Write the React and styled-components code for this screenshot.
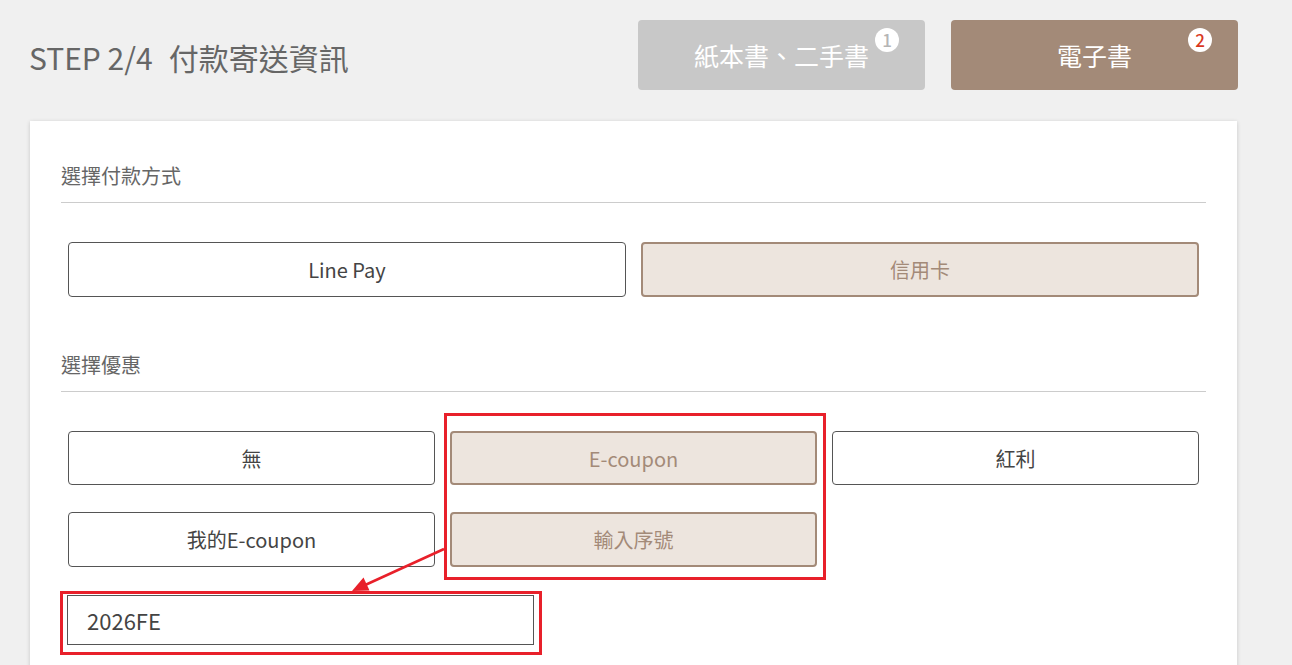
import React from 'react';
import styled, { createGlobalStyle } from 'styled-components';

const GlobalStyle = createGlobalStyle`
  html, body {
    margin: 0;
    padding: 0;
    background: #f0f0f0;
    font-family: "Noto Sans CJK TC", "Noto Sans", sans-serif;
  }
  * {
    box-sizing: border-box;
  }
`;

const Page = styled.div`
  width: 1208px;
  margin-left: 30px;
  padding-top: 20px;
`;

const Header = styled.div`
  display: flex;
  justify-content: space-between;
  align-items: center;
`;

const Title = styled.h1`
  margin: 4px 0 0 -1px;
  font-size: 30px;
  font-weight: 400;
  color: #666;

  span {
    margin-left: 16px;
  }
`;

const Tabs = styled.div`
  display: flex;
  gap: 26px;
`;

const Tab = styled.div`
  position: relative;
  width: 287px;
  height: 70px;
  border-radius: 4px;
  background: ${(p) => (p.$active ? '#a38a78' : '#c8c8c8')};
  color: #fff;
  font-size: 25px;
  display: flex;
  align-items: center;
  justify-content: center;
`;

const Badge = styled.span`
  position: absolute;
  top: 8px;
  right: 26px;
  width: 24px;
  height: 24px;
  border-radius: 50%;
  background: #fff;
  color: ${(p) => (p.$active ? '#d9381e' : '#b5b5b5')};
  font-size: 17px;
  line-height: 24px;
  text-align: center;
  font-weight: 500;
`;

const Card = styled.div`
  position: relative;
  margin-top: 31px;
  width: 1207px;
  min-height: 560px;
  background: #fff;
  box-shadow: 0 1px 4px rgba(0, 0, 0, 0.18);
  padding: 41px 31px 40px;
`;

const SectionLabel = styled.div`
  font-size: 20px;
  line-height: 27px;
  color: #666;
  padding-bottom: 13px;
  border-bottom: 1px solid #ccc;
  margin-top: ${(p) => p.$top || 0}px;
`;

const OptionGrid = styled.div`
  display: grid;
  grid-template-columns: repeat(${(p) => p.$cols}, 1fr);
  column-gap: 15px;
  row-gap: 27px;
  padding: 0 7px;
  margin-top: 39px;
`;

const Option = styled.div`
  height: ${(p) => p.$h || 55}px;
  border-radius: 4px;
  border: ${(p) => (p.$selected ? '2px solid #a38a78' : '1px solid #555')};
  background: ${(p) => (p.$selected ? '#ede5de' : '#fff')};
  color: ${(p) => (p.$selected ? '#a38a78' : '#444')};
  font-size: 20px;
  display: flex;
  align-items: center;
  justify-content: center;
`;

const SerialInput = styled.input`
  display: block;
  margin: 28px 0 0 6px;
  width: 467px;
  height: 50px;
  border: 1px solid #555;
  border-radius: 0;
  padding: 0 19px;
  font-family: inherit;
  font-size: 22px;
  color: #444;
  outline: none;
`;

const Highlight = styled.div`
  position: absolute;
  left: ${(p) => p.$x}px;
  top: ${(p) => p.$y}px;
  width: ${(p) => p.$w}px;
  height: ${(p) => p.$h}px;
  border: 3px solid #e8202a;
  pointer-events: none;
`;

const ArrowSvg = styled.svg`
  position: absolute;
  left: 0;
  top: 0;
  overflow: visible;
  pointer-events: none;
`;

export default function App() {
  return (
    <>
      <GlobalStyle />
      <Page>
        <Header>
          <Title>
            STEP 2/4<span>付款寄送資訊</span>
          </Title>
          <Tabs>
            <Tab>
              紙本書、二手書
              <Badge>1</Badge>
            </Tab>
            <Tab $active>
              電子書
              <Badge $active>2</Badge>
            </Tab>
          </Tabs>
        </Header>

        <Card>
          <SectionLabel>選擇付款方式</SectionLabel>
          <OptionGrid $cols={2}>
            <Option>Line Pay</Option>
            <Option $selected>信用卡</Option>
          </OptionGrid>

          <SectionLabel $top={54}>選擇優惠</SectionLabel>
          <OptionGrid $cols={3}>
            <Option $h={54}>無</Option>
            <Option $h={54} $selected>E-coupon</Option>
            <Option $h={54}>紅利</Option>
            <Option>我的E-coupon</Option>
            <Option $selected>輸入序號</Option>
          </OptionGrid>
          <SerialInput defaultValue="2026FE" />

          <Highlight $x={414} $y={292} $w={382} $h={167} />
          <Highlight $x={30} $y={470} $w={482} $h={64} />
          <ArrowSvg width="1" height="1">
            <line x1="414" y1="428" x2="333" y2="465" stroke="#e8202a" strokeWidth="2.5" />
            <polygon points="322,470 339.5,469.5 333.5,456.5" fill="#e8202a" />
          </ArrowSvg>
        </Card>
      </Page>
    </>
  );
}
